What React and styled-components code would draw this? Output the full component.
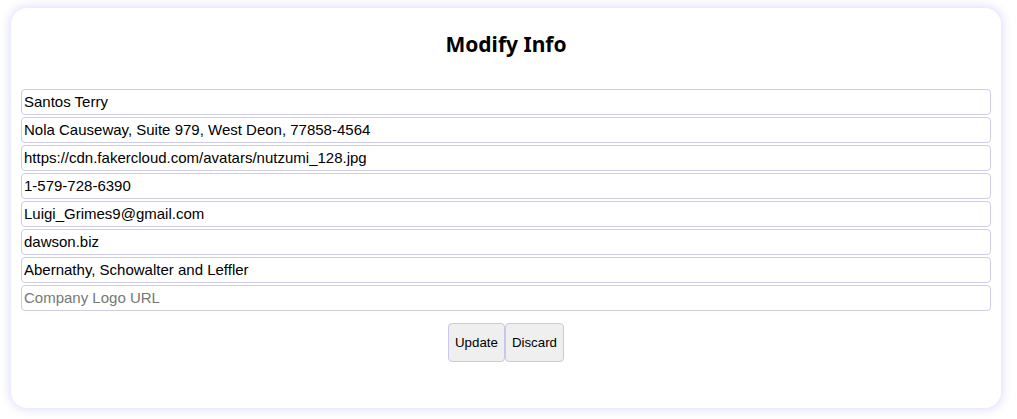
import React from 'react'
import styled, { createGlobalStyle } from 'styled-components'

const GlobalStyle = createGlobalStyle`
  body {
    margin: 0;
    background: #fff;
    font-family: "Liberation Sans", Arial, sans-serif;
  }
`

const Page = styled.div`
  padding: 8px 16px 11px 11px;
`

const Card = styled.div`
  background: #fff;
  border-radius: 16px;
  box-shadow: 0 0 8px 2px rgba(130, 130, 255, 0.25);
  padding: 22px 10px 46px;
`

const Title = styled.h2`
  margin: 0 0 31px;
  text-align: center;
  font-family: "Noto Sans", sans-serif;
  font-weight: 700;
  font-size: 21px;
  line-height: 28px;
  color: #000;
`

const Form = styled.form`
  display: flex;
  flex-direction: column;
  gap: 2px;
`

const Input = styled.input`
  box-sizing: border-box;
  width: 100%;
  height: 26px;
  margin: 0;
  padding: 0 2px 1px;
  border: 1px solid #cfcde6;
  border-radius: 4px;
  font-family: "Liberation Sans", Arial, sans-serif;
  font-size: 15px;
  color: #000;
  background: #fff;
  outline: none;

  &::placeholder {
    color: #777;
  }
`

const Actions = styled.div`
  display: flex;
  justify-content: center;
  margin-top: 10px;
`

const Button = styled.button`
  box-sizing: border-box;
  height: 39px;
  padding: 0 6px;
  border: 1px solid #c9c7ea;
  border-radius: 4px;
  background: #efefef;
  font-family: "Liberation Sans", Arial, sans-serif;
  font-size: 13.3px;
  color: #000;
  cursor: pointer;
`

const fields = [
  { name: 'name', value: 'Santos Terry' },
  { name: 'address', value: 'Nola Causeway, Suite 979, West Deon, 77858-4564' },
  { name: 'avatar', value: 'https://cdn.fakercloud.com/avatars/nutzumi_128.jpg' },
  { name: 'phone', value: '1-579-728-6390' },
  { name: 'email', value: 'Luigi_Grimes9@gmail.com' },
  { name: 'website', value: 'dawson.biz' },
  { name: 'company', value: 'Abernathy, Schowalter and Leffler' },
  { name: 'logo', value: '', placeholder: 'Company Logo URL' },
]

export default function App() {
  return (
    <>
      <GlobalStyle />
      <Page>
        <Card>
          <Title>Modify Info</Title>
          <Form onSubmit={e => e.preventDefault()}>
            {fields.map(f => (
              <Input
                key={f.name}
                name={f.name}
                defaultValue={f.value}
                placeholder={f.placeholder}
              />
            ))}
            <Actions>
              <Button type="submit">Update</Button>
              <Button type="button">Discard</Button>
            </Actions>
          </Form>
        </Card>
      </Page>
    </>
  )
}
